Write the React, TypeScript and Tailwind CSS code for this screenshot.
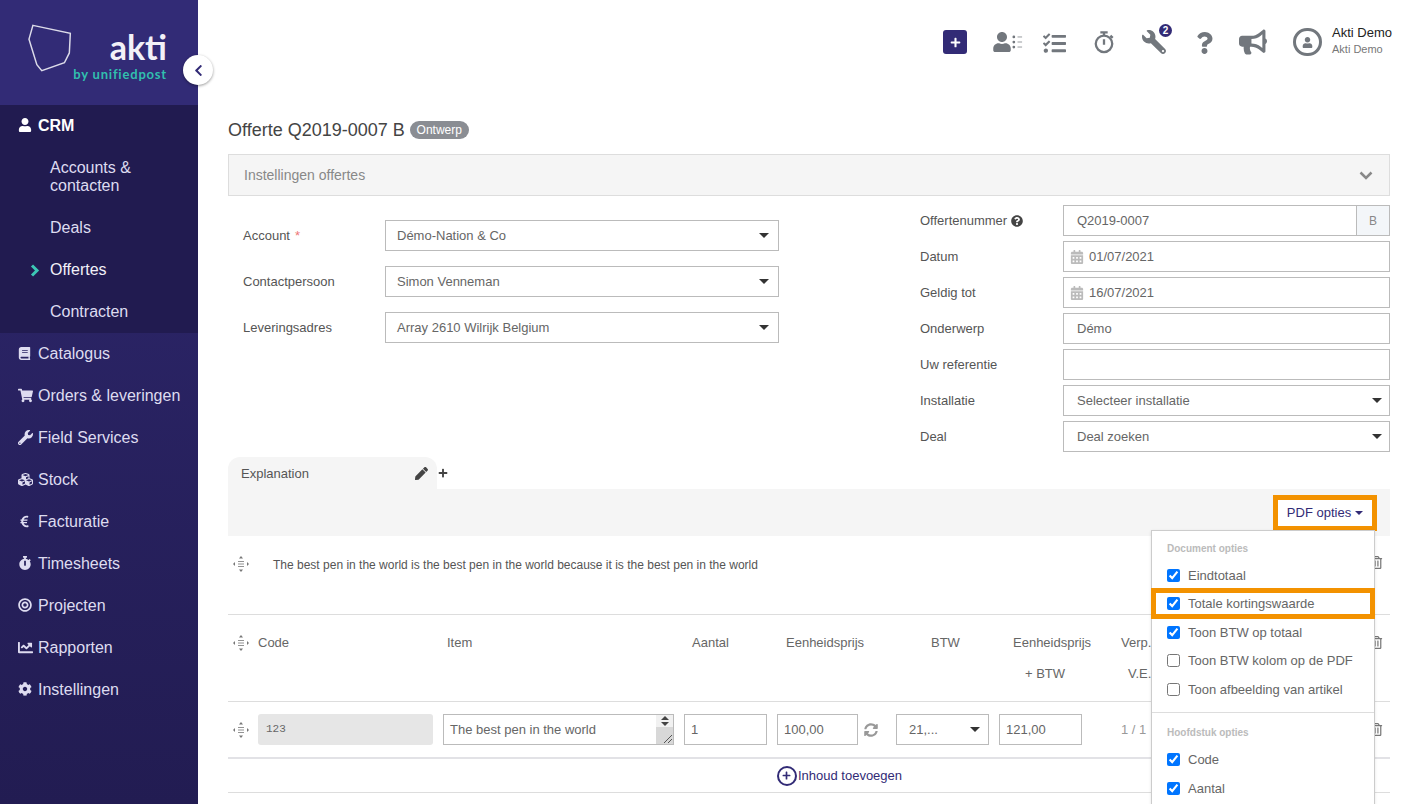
import React from 'react';
import {
  FaBook,
  FaBullhorn,
  FaBullseye,
  FaCalendarAlt,
  FaChartLine,
  FaChevronLeft,
  FaCog,
  FaCubes,
  FaEuroSign,
  FaPen,
  FaPlus,
  FaQuestion,
  FaQuestionCircle,
  FaRegTrashAlt,
  FaShoppingCart,
  FaStopwatch,
  FaSyncAlt,
  FaTasks,
  FaUser,
  FaWrench,
} from 'react-icons/fa';

const NAV = [
  { label: 'Catalogus', icon: <FaBook size={13} /> },
  { label: 'Orders & leveringen', icon: <FaShoppingCart size={15} /> },
  { label: 'Field Services', icon: <FaWrench size={15} /> },
  { label: 'Stock', icon: <FaCubes size={15} /> },
  { label: 'Facturatie', icon: <FaEuroSign size={13} /> },
  { label: 'Timesheets', icon: <FaStopwatch size={14} /> },
  { label: 'Projecten', icon: <FaBullseye size={14} /> },
  { label: 'Rapporten', icon: <FaChartLine size={15} /> },
  { label: 'Instellingen', icon: <FaCog size={14} /> },
];

const caret = (
  <svg viewBox="0 0 10 5" className="w-[10px] h-[5px] shrink-0 fill-[#333]">
    <polygon points="0,0 10,0 5,5" />
  </svg>
);

// move handle in front of every row
const dragHandle = (
  <svg viewBox="0 0 16 16" className="w-4 h-4 shrink-0 fill-[#777] stroke-[#777]">
    <polygon points="8,0 10,2.5 6,2.5" strokeWidth="0" />
    <polygon points="8,16 10,13.5 6,13.5" strokeWidth="0" />
    <polygon points="0,8 2,6 2,10" strokeWidth="0" />
    <polygon points="16,8 14,6 14,10" strokeWidth="0" />
    <path d="M5 5.5h6M5 8h6M5 10.5h6" strokeWidth="0.8" fill="none" />
  </svg>
);

function Box({ children, className = '' }: { children: React.ReactNode; className?: string }) {
  return (
    <div
      className={`h-[31px] flex items-center border border-[#bbb] bg-white text-[13px] text-[#666] ${className}`}
    >
      {children}
    </div>
  );
}

function LeftRow({ label, value, required }: { label: string; value: string; required?: boolean }) {
  return (
    <div className="flex items-center">
      <div className="w-[142px] text-[13px] text-[#555]">
        {label}
        {required && <span className="text-[#e77] ml-[5px]">*</span>}
      </div>
      <Box className="w-[394px] pl-[11px] pr-[9px] justify-between">
        {value}
        {caret}
      </Box>
    </div>
  );
}

function RightRow({ label, children }: { label: React.ReactNode; children: React.ReactNode }) {
  return (
    <div className="flex items-center">
      <div className="w-[143px] text-[13px] text-[#555] flex items-center gap-1">{label}</div>
      <div className="w-[327px]">{children}</div>
    </div>
  );
}

function Check({ label, checked }: { label: string; checked?: boolean }) {
  return (
    <label className="h-[28.5px] flex items-center px-[15px] text-[13px] text-[#666] whitespace-nowrap">
      <input type="checkbox" defaultChecked={checked} className="w-[13px] h-[13px] m-0 mr-2" />
      {label}
    </label>
  );
}

function Trash() {
  return <FaRegTrashAlt size={13} className="ml-auto mr-[7px] text-[#777] shrink-0" />;
}

export default function App() {
  return (
    <div className="h-screen flex overflow-hidden bg-white font-['Liberation_Sans',Arial,sans-serif] relative">
      <aside className="w-[198px] shrink-0 flex flex-col text-[16px] text-[#dedcf0] bg-gradient-to-b from-[#2f2870] to-[#221c52]">
        <div className="h-[105px] shrink-0 bg-[#322b76] flex pl-[28px] pr-[31px] pt-[24px]">
          <svg viewBox="0 0 46 50" className="w-[46px] h-[50px] fill-none stroke-[#dcdbe9] stroke-[1.5]">
            <polygon points="5,1 43,9 42,29 37,39 14,47 9,41 1,15" />
          </svg>
          <div className="ml-auto flex flex-col items-end">
            <div className="font-['Lato',sans-serif] font-bold text-[34px] leading-[36px] mt-[5px] text-[#f2f1f8]">akti</div>
            <div className="font-['Lato',sans-serif] font-bold text-[13px] leading-[16px] mt-px tracking-[0.8px] text-[#31bfae] whitespace-nowrap">
              by unifiedpost
            </div>
          </div>
        </div>
        <div className="bg-[#211b50]">
          <div className="h-[42px] flex items-center pl-[18px] font-bold text-white">
            <FaUser size={14} className="w-5 mb-[3px] -ml-[3px] mr-[3px]" />
            CRM
          </div>
          <div className="py-3 pl-[50px] leading-[18px]">Accounts &<br />contacten</div>
          <div className="py-3 pl-[50px] leading-[18px]">Deals</div>
          <div className="py-3 pl-[30px] leading-[18px] flex items-center">
            <svg viewBox="0 0 10 13" className="w-[10px] h-[13px] fill-none stroke-[#3cc6b4] stroke-[3]">
              <path d="M2 1.5L7 6.5L2 11.5" />
            </svg>
            <span className="ml-[10px] text-[#f2f1f8]">Offertes</span>
          </div>
          <div className="py-3 pl-[50px] leading-[18px]">Contracten</div>
        </div>
        {NAV.map(item => (
          <div key={item.label} className="py-3 pl-[18px] leading-[18px] flex items-center">
            <span className="w-5 flex mb-[2px]">{item.icon}</span>
            <span className="whitespace-nowrap">{item.label}</span>
          </div>
        ))}
      </aside>

      <button className="absolute left-[183px] top-[55px] w-[30px] h-[30px] rounded-full bg-white shadow-[0_1px_3px_rgba(0,0,0,0.4)] flex items-center justify-center text-[#322b76]">
        <FaChevronLeft size={13} />
      </button>

      <main className="flex-1 min-w-0 pl-[30px] pr-[11px]">
        <header className="h-[118px] pt-[28px] flex items-start text-[#72777d]">
          <div className="ml-auto -mr-[2px] flex items-center h-[28px]">
            <div className="w-[24px] h-[24px] rounded-[3px] bg-[#322b76] flex items-center justify-center text-white">
              <FaPlus size={11} />
            </div>
            <div className="ml-[26px] w-[30px] flex items-center">
              <FaUser size={20} className="shrink-0 -ml-px" />
              <svg viewBox="0 0 12 16" className="w-[11px] h-[16px] shrink-0 fill-[#72777d]">
                <circle cx="2" cy="2.5" r="1.5" />
                <circle cx="2" cy="8" r="1.5" />
                <circle cx="2" cy="13.5" r="1.5" />
                <path d="M6 2.5h5M6 8h5M6 13.5h5" stroke="#72777d" strokeWidth="0.8" />
              </svg>
            </div>
            <FaTasks size={23} className="ml-[20px] mt-[2px]" />
            <svg viewBox="0 0 24 26" className="ml-[27px] w-[22px] h-[24px] fill-none stroke-[#72777d] stroke-[2.5]">
              <circle cx="12" cy="15" r="9" />
              <path d="M8 2.5h8M12 2.5v3M12 10v6M19 6l2.5 2.5" />
            </svg>
            <div className="ml-[27px] relative">
              <FaWrench size={24} className="-scale-x-100" />
              <div className="absolute -top-[6px] -right-[6px] w-[13px] h-[13px] rounded-full bg-[#322b76] text-white text-[10px] font-bold leading-[13px] text-center">
                2
              </div>
            </div>
            <FaQuestion size={22} className="ml-[30px] w-[17px] mt-[2px]" />
            <FaBullhorn size={28} className="ml-[26px]" />
            <div className="ml-[26px] w-[29px] h-[28px] rounded-full border-[3px] border-[#72777d] flex items-center justify-center">
              <FaUser size={11} />
            </div>
            <div className="ml-[10px] w-[60px] whitespace-nowrap -mt-px">
              <div className="text-[13px] leading-[16px] text-[#222]">Akti Demo</div>
              <div className="text-[11px] leading-[17px] text-[#777]">Akti Demo</div>
            </div>
          </div>
        </header>

        <div className="h-[24px] flex items-center">
          <h1 className="text-[18px] text-[#444]">Offerte Q2019-0007 B</h1>
          <span className="ml-[5px] w-[59px] h-[18px] justify-center rounded-full bg-[#8a8d93] text-white text-[12px] flex items-center">
            Ontwerp
          </span>
        </div>

        <div className="mt-3 h-[42px] border border-[#ddd] bg-[#f5f5f5] flex items-center justify-between pl-[15px] pr-[16px] text-[14px] text-[#888]">
          Instellingen offertes
          <svg viewBox="0 0 14 9" className="w-[14px] h-[9px] fill-none stroke-[#888] stroke-[2.5]">
            <path d="M1.5 1.5L7 7l5.5-5.5" />
          </svg>
        </div>

        <div className="mt-[9px] flex">
          <div className="w-[692px] pt-[15px] pl-[15px] flex flex-col gap-[15px]">
            <LeftRow label="Account" value="Démo-Nation & Co" required />
            <LeftRow label="Contactpersoon" value="Simon Venneman" />
            <LeftRow label="Leveringsadres" value="Array 2610 Wilrijk Belgium" />
          </div>
          <div className="flex flex-col gap-[5px]">
            <RightRow
              label={
                <>
                  Offertenummer <FaQuestionCircle size={12} className="text-[#444]" />
                </>
              }
            >
              <Box className="pl-[13px]">
                Q2019-0007
                <div className="ml-auto w-[33px] h-full bg-[#f3f6f9] border-l border-[#bbb] flex items-center justify-center text-[12px] text-[#888]">
                  B
                </div>
              </Box>
            </RightRow>
            <RightRow label="Datum">
              <Box className="pl-[6px] gap-[5px]">
                <FaCalendarAlt size={14} className="text-[#bbb]" />
                01/07/2021
              </Box>
            </RightRow>
            <RightRow label="Geldig tot">
              <Box className="pl-[6px] gap-[5px]">
                <FaCalendarAlt size={14} className="text-[#bbb]" />
                16/07/2021
              </Box>
            </RightRow>
            <RightRow label="Onderwerp">
              <Box className="pl-[13px]">Démo</Box>
            </RightRow>
            <RightRow label="Uw referentie">
              <Box className="pl-[13px]">{''}</Box>
            </RightRow>
            <RightRow label="Installatie">
              <Box className="pl-[13px] pr-[7px] justify-between">
                Selecteer installatie
                {caret}
              </Box>
            </RightRow>
            <RightRow label="Deal">
              <Box className="pl-[13px] pr-[7px] justify-between">
                Deal zoeken
                {caret}
              </Box>
            </RightRow>
          </div>
        </div>

        <div className="mt-[5px] flex items-center">
          <div className="w-[209px] h-[32px] rounded-t-xl bg-[#f5f5f5] flex items-start pt-[7px] pl-[13px] pr-[9px] justify-between text-[13px] text-[#555]">
            Explanation
            <FaPen size={13} className="text-[#444] mt-[3px]" />
          </div>
          <FaPlus size={10} className="ml-[1px] text-[#444]" />
        </div>

        <div className="relative">
          <div className="h-[47px] bg-[#f5f5f5] flex items-center justify-end pr-[13px]">
            <button className="w-[104px] h-[36px] border-[5px] border-[#f39200] bg-white text-[#322b76] text-[13px] flex items-center justify-center gap-[4px]">
              PDF opties
              <svg viewBox="0 0 8 4" className="w-2 h-1 fill-[#322b76]">
                <polygon points="0,0 8,0 4,4" />
              </svg>
            </button>
          </div>

          <div className="absolute z-10 right-[15px] top-[41px] w-[224px] pb-6 bg-white border border-[#ccc] shadow-sm">
            <div className="pt-[10px] pb-[4px] px-[15px] text-[10px] font-bold leading-[16px] text-[#bbb]">Document opties</div>
            <Check label="Eindtotaal" checked />
            <div className="h-[31px] -mx-px -mt-[1.5px] -mb-px relative border-[5px] border-[#f39200] flex items-center pl-[11px] text-[13px] text-[#666] bg-white">
              <input type="checkbox" defaultChecked className="w-[13px] h-[13px] m-0 mr-2" />
              Totale kortingswaarde
            </div>
            <Check label="Toon BTW op totaal" checked />
            <Check label="Toon BTW kolom op de PDF" />
            <Check label="Toon afbeelding van artikel" />
            <div className="my-[8px] border-t border-[#ddd]" />
            <div className="pt-[4px] pb-[5px] px-[15px] text-[10px] font-bold leading-[16px] text-[#bbb]">Hoofdstuk opties</div>
            <Check label="Code" checked />
            <Check label="Aantal" checked />
          </div>
        </div>

        <div className="h-[79px] border-b border-[#ddd] flex items-start pl-[5px] pt-5 text-[12px] text-[#555]">
          {dragHandle}
          <div className="ml-[24px] leading-4 mt-px">The best pen in the world is the best pen in the world because it is the best pen in the world</div>
          <Trash />
        </div>

        <div className="h-[87px] border-b border-[#ddd] flex items-start pl-[5px] py-3 text-[13px] leading-[31px] text-[#666]">
          <div className="h-[31px] flex items-center">{dragHandle}</div>
          <div className="ml-[9px] w-[175px]">Code</div>
          <div className="ml-[10px] w-[231px] pl-1">Item</div>
          <div className="ml-[10px] w-[83px] pl-2">Aantal</div>
          <div className="ml-[10px] w-[119px] pl-[9px] whitespace-nowrap">Eenheidsprijs</div>
          <div className="w-[93px] pl-[35px]">BTW</div>
          <div className="ml-[10px] w-[122px] pl-[14px] whitespace-nowrap">
            Eenheidsprijs
            <div className="pl-[12px]">+ BTW</div>
          </div>
          <div className="whitespace-nowrap">
            Verp.
            <div className="pl-[7px]">V.E.</div>
          </div>
          <div className="h-[31px] ml-auto flex items-center"><Trash /></div>
        </div>

        <div className="h-[57px] border-b-2 border-[#e2e2e6] flex items-start pl-[5px] pt-3 text-[13px] text-[#666]">
          <div className="h-[31px] flex items-center">{dragHandle}</div>
          <div className="ml-[9px] w-[175px] h-[31px] rounded-[3px] bg-[#e6e6e6] flex items-center pl-2 text-[11px] font-['Liberation_Mono',monospace] text-[#666]">
            123
          </div>
          <Box className="ml-[10px] w-[231px] pl-[6px] pr-0 relative">
            The best pen in the world
            <div className="absolute right-0 top-0 bottom-0 w-[17px] bg-[#d8d8d8] flex flex-col items-center">
              <div className="w-full h-[12px] bg-[#f1f1f1] flex flex-col items-center justify-center gap-[1px]">
                <svg viewBox="0 0 8 10" className="w-2 h-[10px] fill-[#444]">
                  <polygon points="4,0 8,4 0,4" />
                  <polygon points="4,10 8,6 0,6" />
                </svg>
              </div>
              <svg viewBox="0 0 10 10" className="mt-auto self-end w-[10px] h-[10px] stroke-[#555] fill-none">
                <path d="M1 9L9 1M5 9L9 5" />
              </svg>
            </div>
          </Box>
          <Box className="ml-[10px] w-[83px] pl-[6px]">1</Box>
          <Box className="ml-[10px] w-[81px] pl-[6px]">100,00</Box>
          <div className="h-[31px] w-[38px] flex items-center pl-[6px]">
            <FaSyncAlt size={14} className="text-[#999]" />
          </div>
          <Box className="w-[93px] pl-3 pr-2 justify-between">
            21,...
            {caret}
          </Box>
          <Box className="ml-[10px] w-[83px] pl-[6px]">121,00</Box>
          <div className="h-[31px] ml-[39px] flex items-center text-[#999] whitespace-nowrap">1 / 1</div>
          <div className="h-[31px] ml-auto flex items-center"><Trash /></div>
        </div>

        <div className="h-[34px] border-b border-[#ddd] flex items-center justify-center pl-[61px] text-[13px] text-[#322b76]">
          <span className="w-5 h-5 mr-px rounded-full border-2 border-[#322b76] flex items-center justify-center">
            <FaPlus size={9} />
          </span>
          Inhoud toevoegen
        </div>
      </main>
    </div>
  );
}
